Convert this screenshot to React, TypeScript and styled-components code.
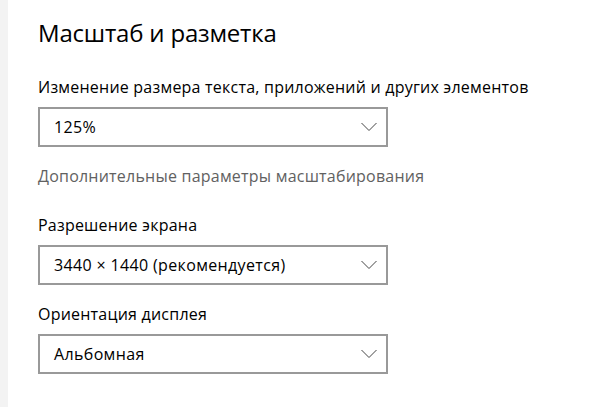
import styled, { createGlobalStyle } from "styled-components";

const GlobalStyle = createGlobalStyle`
  html, body {
    margin: 0;
    padding: 0;
    background: #ffffff;
  }
  body {
    font-family: 'Open Sans', 'Noto Sans', sans-serif;
    color: #000000;
  }
`

const Page = styled.div`
  display: flex;
  width: 614px;
  height: 407px;
  overflow: hidden;
  background: #ffffff;
`

const SideStrip = styled.div`
  width: 8px;
  flex: none;
  background: #f3f3f3;
`

const Content = styled.main`
  display: flex;
  flex-direction: column;
  padding: 13px 0 0 30px;
`

const Title = styled.h1`
  margin: 0 0 23px;
  font-size: 24px;
  font-weight: 400;
  line-height: 40px;
  letter-spacing: -0.2px;
`

const Label = styled.div`
  font-size: 16px;
  line-height: 22px;
  letter-spacing: 0.22px;
  margin-bottom: 9px;
`

const Link = styled.div`
  font-size: 16px;
  line-height: 22px;
  letter-spacing: 0.22px;
  color: #616161;
  margin: 18px 0 27px;
`

const Field = styled.div<{ $gap?: number }>`
  margin-bottom: ${({ $gap }) => $gap ?? 0}px;
`

const Select = styled.button`
  box-sizing: border-box;
  display: flex;
  align-items: center;
  justify-content: space-between;
  width: 350px;
  height: 40px;
  padding: 0 9px 0 14px;
  border: 2px solid #999999;
  background: #ffffff;
  font: inherit;
  font-size: 16px;
  letter-spacing: 0.35px;
  color: #000000;
  text-align: left;
`

const Chevron = () => (
  <svg width="16" height="10" viewBox="0 0 16 10" fill="none">
    <path d="M0.5 1 L8 8.5 L15.5 1" stroke="#444" strokeWidth="1" />
  </svg>
)

const Dropdown = ({ value }: { value: string }) => (
  <Select type="button">
    <span>{value}</span>
    <Chevron />
  </Select>
)

export default function App() {
  return (
    <>
      <GlobalStyle />
      <Page>
        <SideStrip />
        <Content>
          <Title>Масштаб и разметка</Title>
          <Field>
            <Label>Изменение размера текста, приложений и других элементов</Label>
            <Dropdown value="125%" />
          </Field>
          <Link>Дополнительные параметры масштабирования</Link>
          <Field $gap={18}>
            <Label>Разрешение экрана</Label>
            <Dropdown value="3440 × 1440 (рекомендуется)" />
          </Field>
          <Field>
            <Label>Ориентация дисплея</Label>
            <Dropdown value="Альбомная" />
          </Field>
        </Content>
      </Page>
    </>
  );
}
